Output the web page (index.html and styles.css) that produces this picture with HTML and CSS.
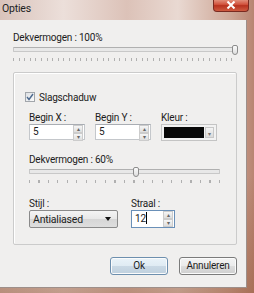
FILE: index.html
```html
<!DOCTYPE html>
<html lang="nl">
<head>
    <meta charset="UTF-8">
    <title>Opties</title>
    <link rel="stylesheet" href="styles.css">
</head>
<body>
    <div class="window">
        <div class="titlebar">
            <span class="title">Opties</span>
            <div class="close-btn">
                <svg width="10" height="8" viewBox="0 0 10 8"><path d="M1.5 0.5 L8.5 7.5 M8.5 0.5 L1.5 7.5" stroke="#fff" stroke-width="2"/></svg>
            </div>
        </div>

        <div class="client">
            <div class="label">Dekvermogen : 100%</div>
            <div class="slider slider-full">
                <div class="track"></div>
                <div class="thumb" style="left: 219px"></div>
            </div>
            <div class="ticks ticks-fine"></div>

            <div class="group">
                <label class="check-row">
                    <span class="checkbox">
                        <svg width="8" height="8" viewBox="0 0 8 8"><path d="M1 4 L3 6.5 L7 1" fill="none" stroke="#4d6a8f" stroke-width="1.4"/></svg>
                    </span>
                    <span>Slagschaduw</span>
                </label>

                <div class="fields">
                    <div class="field field-x">
                        <div class="field-label">Begin X :</div>
                        <div class="spin-input">
                            <span class="value">5</span>
                            <div class="spinner"><span>&#9652;</span><span>&#9662;</span></div>
                        </div>
                    </div>
                    <div class="field field-y">
                        <div class="field-label">Begin Y :</div>
                        <div class="spin-input">
                            <span class="value">5</span>
                            <div class="spinner"><span>&#9652;</span><span>&#9662;</span></div>
                        </div>
                    </div>
                    <div class="field field-color">
                        <div class="field-label">Kleur :</div>
                        <div class="color-box">
                            <span class="swatch"></span>
                            <span class="color-arrow">&#9662;</span>
                        </div>
                    </div>
                </div>

                <div class="label label-inner">Dekvermogen : 60%</div>
                <div class="slider slider-part">
                    <div class="track"></div>
                    <div class="thumb" style="left: 104px"></div>
                </div>
                <div class="ticks ticks-wide"></div>

                <div class="fields fields-bottom">
                    <div class="field field-style">
                        <div class="field-label">Stijl :</div>
                        <div class="select">
                            <span>Antialiased</span>
                            <span class="select-arrow"></span>
                        </div>
                    </div>
                    <div class="field field-radius">
                        <div class="field-label">Straal :</div>
                        <div class="spin-input focused">
                            <span class="value">12<span class="caret"></span></span>
                            <div class="spinner"><span>&#9652;</span><span>&#9662;</span></div>
                        </div>
                    </div>
                </div>
            </div>

            <div class="buttons">
                <div class="btn btn-default">Ok</div>
                <div class="btn">Annuleren</div>
            </div>
        </div>
    </div>
</body>
</html>
```

FILE: styles.css
```css
* {
    margin: 0;
    padding: 0;
    box-sizing: border-box;
}

body {
    width: 254px;
    height: 293px;
    overflow: hidden;
    font-family: Roboto, 'Liberation Sans', sans-serif;
    font-size: 10px;
    letter-spacing: -0.2px;
    color: #1c1c1c;
    background: #b98470;
}

.window {
    width: 254px;
    height: 293px;
    background:
        linear-gradient(180deg, rgba(255,255,255,0) 60%, rgba(150,90,60,0.5) 100%),
        linear-gradient(90deg, #d9c3bb 0%, #ecdfda 25%, #dcc2b8 50%, #e9d9d2 70%, #cfa999 90%, #b98572 100%);
}

.titlebar {
    height: 20px;
    display: flex;
    justify-content: space-between;
    align-items: flex-start;
    padding: 0 5px 0 2px;
}

.title {
    font-size: 10.5px;
    line-height: 17px;
    color: #222;
}

.close-btn {
    width: 36px;
    height: 13px;
    margin-top: -1px;
    border: 1px solid #7a2a20;
    border-top: none;
    border-radius: 0 0 4px 4px;
    background: linear-gradient(180deg, #e59a86 0%, #d2533e 45%, #b8321f 55%, #cf5a40 100%);
    display: flex;
    align-items: center;
    justify-content: center;
}

.client {
    width: 247px;
    height: 268px;
    background: #f0efee;
    border-right: 1px solid #9d8f8a;
    border-bottom: 1px solid #9d8f8a;
    padding: 11px 9px 0 13px;
}

.label {
    height: 14px;
    line-height: 14px;
    white-space: nowrap;
}

.slider {
    position: relative;
    height: 10px;
}

.slider-full {
    width: 224px;
}

.slider-part {
    width: 191px;
}

.track {
    position: relative;
    top: 2px;
    height: 5px;
    background: #e8e8e8;
    border: 1px solid #c8c8c8;
    border-top-color: #b0b0b0;
    border-radius: 1px;
}

.thumb {
    position: absolute;
    top: 0;
    width: 6px;
    height: 10px;
    background: linear-gradient(180deg, #fafafa, #dedede);
    border: 1px solid #8c8c8c;
    border-radius: 2px 2px 3px 3px;
}

.ticks {
    height: 3px;
    margin-top: 3px;
}

.ticks-fine {
    width: 224px;
    background: repeating-linear-gradient(90deg, #b0b0b0 0 1px, transparent 1px 5.6px);
}

.ticks-wide {
    width: 192px;
    background: repeating-linear-gradient(90deg, #b0b0b0 0 1px, transparent 1px 9.5px);
}

.group {
    width: 224px;
    height: 173px;
    margin-top: 11px;
    border: 1px solid #cbcbcb;
    border-radius: 2px;
    box-shadow: inset 1px 1px 0 #fff;
    padding: 18px 0 0 15px;
}

.check-row {
    display: flex;
    align-items: center;
    gap: 4px;
    height: 12px;
    margin-left: -4px;
}

.checkbox {
    width: 10px;
    height: 10px;
    border: 1px solid #a2a6ab;
    background: linear-gradient(135deg, #dde0e4, #fbfbfb);
    display: flex;
    align-items: center;
    justify-content: center;
}

.fields {
    display: flex;
    gap: 10px;
    margin-top: 8px;
}

.field-label {
    height: 13px;
    line-height: 13px;
}

.field-x { width: 56px; }
.field-y { width: 56px; }
.field-color { width: 56px; }

.spin-input {
    height: 16px;
    background: #fff;
    border: 1px solid #c4c7cb;
    border-top-color: #a9adb3;
    display: flex;
    justify-content: space-between;
    align-items: stretch;
    padding-left: 3px;
}

.value {
    line-height: 14px;
}

.spinner {
    width: 10px;
    display: flex;
    flex-direction: column;
    margin: 0 1px 0 0;
}

.spinner span {
    flex: 1;
    font-size: 6px;
    line-height: 6px;
    text-align: center;
    color: #666;
    background: linear-gradient(180deg, #f6f6f6, #dedede);
    border: 1px solid #cccccc;
}

.color-box {
    height: 17px;
    border: 1px solid #c4c4c4;
    background: #f2f2f2;
    display: flex;
    align-items: stretch;
    padding: 2px;
    gap: 1px;
}

.swatch {
    flex: 1;
    background: #080808;
}

.color-arrow {
    width: 9px;
    font-size: 6px;
    line-height: 11px;
    text-align: center;
    color: #777;
    background: linear-gradient(180deg, #f4f4f4, #dadada);
    border: 1px solid #c8c8c8;
}

.label-inner {
    margin-top: 12px;
}

.fields-bottom {
    gap: 13px;
    margin-top: 14px;
}

.field-style { width: 89px; }
.field-radius { width: 44px; }

.select {
    height: 18px;
    border: 1px solid #8a8a8a;
    border-radius: 2px;
    background: linear-gradient(180deg, #f4f4f4 0%, #e8e8e8 50%, #d6d6d6 51%, #dedede 100%);
    display: flex;
    align-items: center;
    justify-content: space-between;
    padding: 0 6px 0 3px;
    font-size: 10.5px;
}

.select-arrow {
    width: 0;
    height: 0;
    border-left: 3.5px solid transparent;
    border-right: 3.5px solid transparent;
    border-top: 4px solid #111;
}

.focused {
    height: 18px;
    border-color: #6a90b8;
}

.focused .value {
    line-height: 16px;
}

.caret {
    display: inline-block;
    width: 1px;
    height: 12px;
    background: #000;
    vertical-align: -2px;
}

.buttons {
    display: flex;
    justify-content: flex-end;
    gap: 11px;
    margin-top: 12px;
}

.btn {
    width: 58px;
    height: 18px;
    border: 1px solid #7b7b7b;
    border-radius: 3px;
    background: linear-gradient(180deg, #f3f3f3 0%, #ebebeb 50%, #dddddd 51%, #cfcfcf 100%);
    box-shadow: inset 0 0 0 1px #fbfbfb;
    text-align: center;
    line-height: 16px;
    font-size: 10px;
}

.btn-default {
    border-color: #6d8fae;
    background: linear-gradient(180deg, #eaf3f9 0%, #dfebf3 50%, #cad9e5 51%, #bfd0de 100%);
}
```
